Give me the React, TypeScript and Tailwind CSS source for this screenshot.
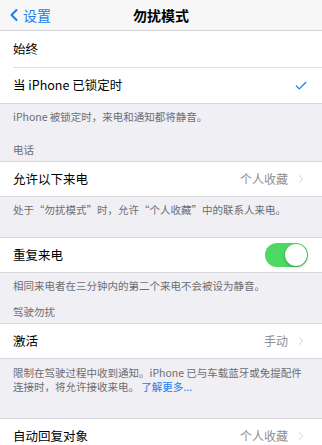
import { ChevronLeft, ChevronRight, Check } from 'lucide-react'

const font = { fontFamily: '"Noto Sans CJK SC", "Noto Sans", sans-serif' }

function Row({ label, value, border = true, children }: { label: string; value?: string; border?: boolean; children?: React.ReactNode }) {
  return (
    <div className={`flex h-[36px] items-center justify-between bg-white pl-[13px] pr-[14px] ${border ? 'border-y border-[#d8d8dc]' : ''}`}>
      <span className="text-[12.5px] text-black">{label}</span>
      {value && (
        <span className="flex items-center gap-[6px] text-[12px] text-[#8e8e93]">
          {value}
          <ChevronRight size={14} strokeWidth={1.4} className="text-[#c7c7cc]" />
        </span>
      )}
      {children}
    </div>
  )
}

export default function App() {
  return (
    <div style={font} className="h-[445px] w-[322px] overflow-hidden bg-[#efeff4]">
      {/* Nav bar */}
      <div className="relative flex h-[31px] items-center border-b border-[#d8d8dc] bg-[#f7f7f7]">
        <div className="flex items-center pl-[4px] text-[#1a7cf0]">
          <ChevronLeft size={20} strokeWidth={2.4} />
          <span className="-ml-[1px] text-[14px]">设置</span>
        </div>
        <span className="absolute left-1/2 -translate-x-1/2 text-[14px] font-semibold text-black">勿扰模式</span>
      </div>

      {/* Group 1 */}
      <div className="bg-white">
        <div className="flex h-[36px] items-center pl-[13px] text-[12.5px]">始终</div>
        <div className="ml-[13px] h-px bg-[#e0e0e4]" />
        <div className="flex h-[36px] items-center justify-between border-b border-[#d8d8dc] pl-[13px] pr-[14px] text-[12.5px]">
          当 iPhone 已锁定时
          <Check size={14} strokeWidth={2.2} className="text-[#1a7cf0]" />
        </div>
      </div>
      <div className="px-[13px] pb-[4px] pt-[6px] text-[10.5px] leading-[14px] text-[#6d6d72]">
        <div>iPhone 被锁定时，来电和通知都将静音。</div>
        <div className="mt-[19px]">电话</div>
      </div>

      <Row label="允许以下来电" value="个人收藏" />
      <div className="px-[13px] pb-[20px] pt-[6px] text-[10.5px] leading-[14px] text-[#6d6d72]">
        处于“勿扰模式”时，允许“个人收藏”中的联系人来电。
      </div>

      <Row label="重复来电">
        <div className="flex h-[24px] w-[43px] items-center justify-end rounded-full bg-[#4cd964] p-[1px]">
          <div className="h-[22px] w-[22px] rounded-full bg-white shadow-[0_1px_3px_rgba(0,0,0,0.35)]" />
        </div>
      </Row>
      <div className="px-[13px] pb-[4px] pt-[6px] text-[10.5px] leading-[14px] text-[#6d6d72]">
        <div>相同来电者在三分钟内的第二个来电不会被设为静音。</div>
        <div className="mt-[12px]">驾驶勿扰</div>
      </div>

      <Row label="激活" value="手动" />
      <div className="pb-[24px] pl-[13px] pr-[20px] pt-[7px] text-[10.5px] leading-[14px] text-[#6d6d72]">
        限制在驾驶过程中收到通知。iPhone 已与车载蓝牙或免提配件连接时，将允许接收来电。 <span className="text-[#1a7cf0]">了解更多...</span>
      </div>

      <Row label="自动回复对象" value="个人收藏" />
    </div>
  )
}
